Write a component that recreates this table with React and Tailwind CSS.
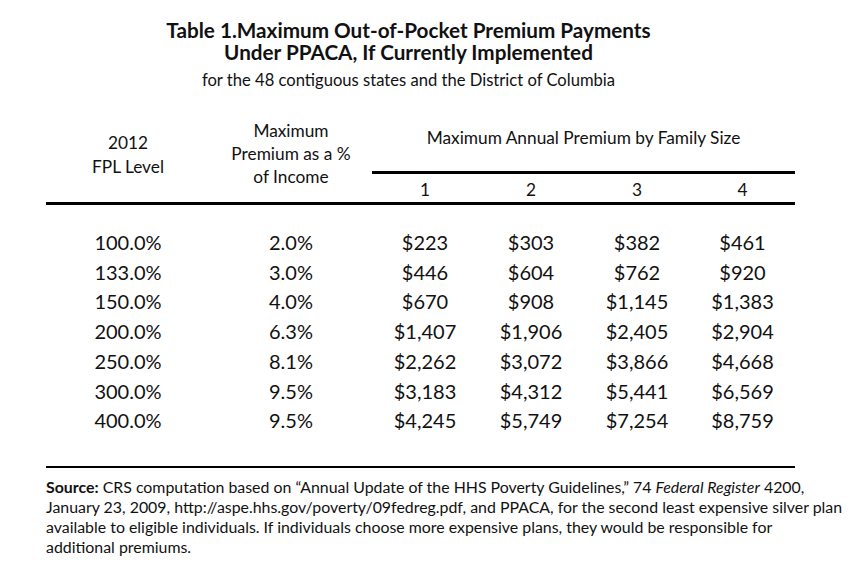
const rows = [
  ["100.0%", "2.0%", "$223", "$303", "$382", "$461"],
  ["133.0%", "3.0%", "$446", "$604", "$762", "$920"],
  ["150.0%", "4.0%", "$670", "$908", "$1,145", "$1,383"],
  ["200.0%", "6.3%", "$1,407", "$1,906", "$2,405", "$2,904"],
  ["250.0%", "8.1%", "$2,262", "$3,072", "$3,866", "$4,668"],
  ["300.0%", "9.5%", "$3,183", "$4,312", "$5,441", "$6,569"],
  ["400.0%", "9.5%", "$4,245", "$5,749", "$7,254", "$8,759"],
];

const grid = "grid grid-cols-[164px_162px_106px_106px_106px_105px]";

export default function App() {
  return (
    <div className="w-[860px] h-[571px] bg-white text-[#111] pl-[46px] pt-[19px] font-['Lato',sans-serif]">
      <div className="w-[749px]">
        {/* Title */}
        <div className="pr-[24px] text-center">
          <h1 className="text-[20.7px] leading-[22px] font-bold">
            Table 1.Maximum Out-of-Pocket Premium Payments
            <br />
            Under PPACA, If Currently Implemented
          </h1>
          <p className="mt-[7px] text-[16.6px] leading-[20px]">
            for the 48 contiguous states and the District of Columbia
          </p>
        </div>

        {/* Header */}
        <div className={`${grid} mt-[24px] border-b-[3px] border-black text-[17.3px]`}>
          <div className="flex items-center justify-center pb-[6px] text-center leading-[24px]">
            <div>
              2012
              <br />
              FPL Level
            </div>
          </div>
          <div className="flex items-center justify-center pb-[9px] text-center leading-[23px]">
            <div>
              Maximum
              <br />
              Premium as a %
              <br />
              of Income
            </div>
          </div>
          <div className="col-span-4">
            <div className="pt-[12px] text-center leading-[24px]">
              Maximum Annual Premium by Family Size
            </div>
            <div className="mt-[21px] border-t-[3px] border-black grid grid-cols-[106px_106px_106px_105px] h-[31px] pt-[3px] items-center text-center">
              <span>1</span>
              <span>2</span>
              <span>3</span>
              <span>4</span>
            </div>
          </div>
        </div>

        {/* Body */}
        <div className="mt-[23px] text-[20px] leading-[29.7px]">
          {rows.map((r) => (
            <div key={r[0]} className={`${grid} text-center`}>
              {r.map((c, i) => (
                <span key={i}>{c}</span>
              ))}
            </div>
          ))}
        </div>

        {/* Source */}
        <div className="mt-[30px] border-t-2 border-black pt-[9px] text-[15.9px] leading-[20px] whitespace-nowrap">
          <div>
            <b>Source:</b> CRS computation based on “Annual Update of the HHS Poverty Guidelines,” 74{" "}
            <i>Federal Register</i> 4200,
          </div>
          <div>
            January 23, 2009, http://aspe.hhs.gov/poverty/09fedreg.pdf, and PPACA, for the second least expensive silver plan
          </div>
          <div>
            available to eligible individuals. If individuals choose more expensive plans, they would be responsible for
          </div>
          <div>additional premiums.</div>
        </div>
      </div>
    </div>
  );
}
